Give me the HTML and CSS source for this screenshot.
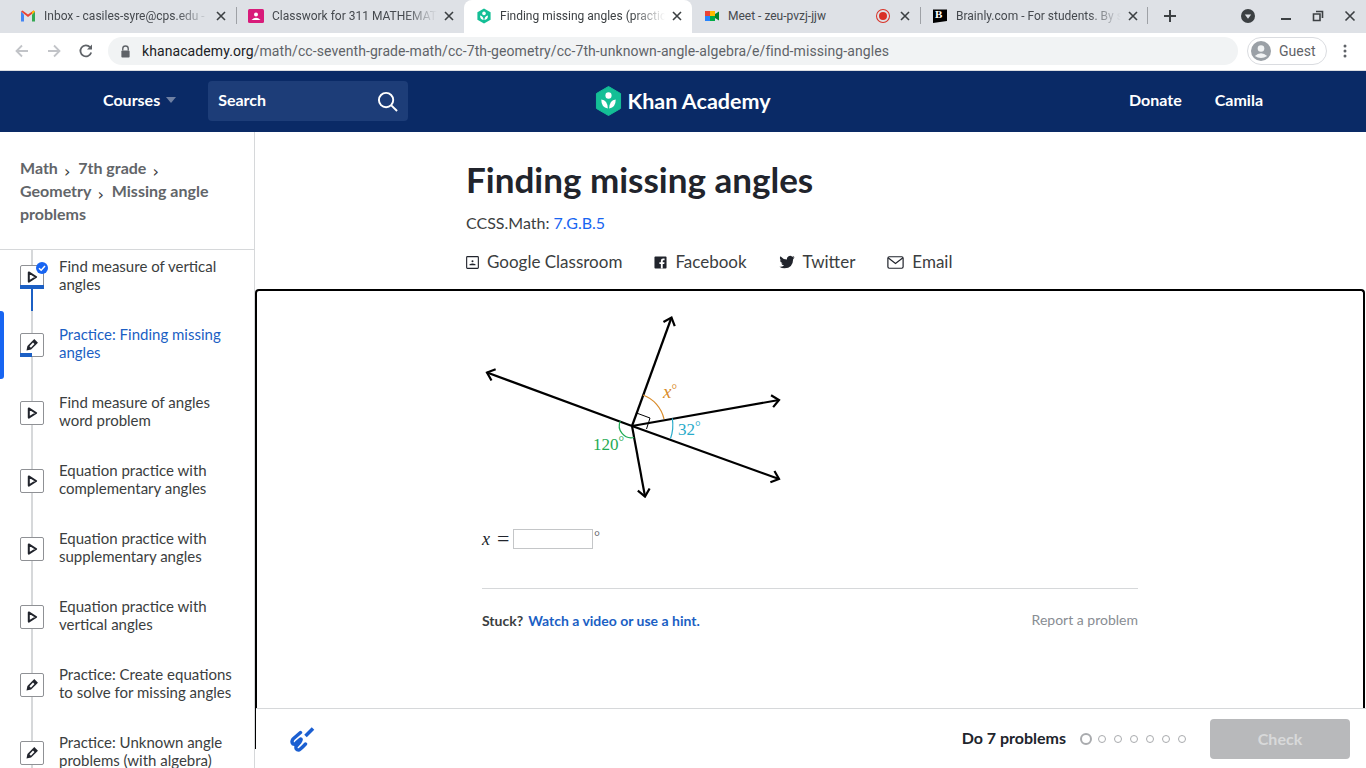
FILE: index.html
```html
<!DOCTYPE html>
<html lang="en">
<head>
<meta charset="utf-8">
<title>Finding missing angles</title>
<link rel="stylesheet" href="styles.css">
</head>
<body>
<svg class="defs" width="0" height="0" aria-hidden="true">
  <defs>
    <symbol id="play" viewBox="0 0 24 24"><path d="M8.5 7 L16.5 12 L8.5 17 Z" fill="none" stroke="#21242c" stroke-width="2.2" stroke-linejoin="round"/></symbol>
    <symbol id="pen" viewBox="0 0 24 24"><path d="M14.5 5.5 L18.5 9.5 L11 17 L6 18 L7 13 Z" fill="#21242c"/><path d="M9.2 13.3 L10.8 14.9 L14.7 11 L13.1 9.4 Z" fill="#fff"/></symbol>
    <marker id="head" viewBox="-12 -8 14 16" markerWidth="14" markerHeight="16" refX="0" refY="0" orient="auto" markerUnits="userSpaceOnUse"><path d="M-7 -6 L0 0 L-7 6" fill="none" stroke="#000" stroke-width="2.2"/></marker>
  </defs>
</svg>

<header class="tabstrip">
  <div class="tab">
    <svg class="fav" viewBox="0 0 16 16"><path d="M1 3.5 V13.5 H4 V6.5 Z" fill="#4285f4"/><path d="M15 3.5 V13.5 H12 V6.5 Z" fill="#34a853"/><path d="M1 3.5 L8 9 L15 3.5 L13.5 2.5 L8 6.5 L2.5 2.5 Z" fill="#ea4335"/><path d="M12 6.5 L15 3.5 L13.5 2.5 L12 3.6 Z" fill="#fbbc04"/></svg>
    <span class="tab-title">Inbox - casiles-syre@cps.edu - </span>
    <svg class="tab-x" viewBox="0 0 10 10"><path d="M1 1 L9 9 M9 1 L1 9" stroke="#3c4043" stroke-width="1.6"/></svg>
  </div>
  <div class="tab sep">
    <svg class="fav" viewBox="0 0 16 16"><rect width="16" height="14" y="1" rx="1.5" fill="#d81b7a"/><circle cx="8" cy="6.5" r="2" fill="#fff"/><path d="M3.5 12 Q8 7.5 12.5 12 Z" fill="#fff"/></svg>
    <span class="tab-title">Classwork for 311 MATHEMATICS</span>
    <svg class="tab-x" viewBox="0 0 10 10"><path d="M1 1 L9 9 M9 1 L1 9" stroke="#3c4043" stroke-width="1.6"/></svg>
  </div>
  <div class="tab active">
    <svg class="fav" viewBox="0 0 16 16"><path d="M8 0.5 L14.6 4.2 V11.8 L8 15.5 L1.4 11.8 V4.2 Z" fill="#14bf96"/><circle cx="8" cy="5.4" r="1.8" fill="#fff"/><path d="M4 7.5 Q7.5 8 7.6 12 Q4 11.5 4 7.5 Z M12 7.5 Q8.5 8 8.4 12 Q12 11.5 12 7.5 Z" fill="#fff"/></svg>
    <span class="tab-title">Finding missing angles (practice)</span>
    <svg class="tab-x" viewBox="0 0 10 10"><path d="M1 1 L9 9 M9 1 L1 9" stroke="#3c4043" stroke-width="1.6"/></svg>
  </div>
  <div class="tab">
    <svg class="fav" viewBox="0 0 16 16"><rect x="1" y="3" width="10" height="10" fill="#ffba00"/><rect x="1" y="8" width="5" height="5" fill="#2684fc"/><rect x="6" y="8" width="5" height="5" fill="#00ac47"/><rect x="1" y="3" width="5" height="5" fill="#ea4335"/><path d="M11 6 L15 3.5 V12.5 L11 10 Z" fill="#00832d"/></svg>
    <span class="tab-title plain">Meet - zeu-pvzj-jjw</span>
    <span class="rec"></span>
    <svg class="tab-x" viewBox="0 0 10 10"><path d="M1 1 L9 9 M9 1 L1 9" stroke="#3c4043" stroke-width="1.6"/></svg>
  </div>
  <div class="tab sep last">
    <svg class="fav" viewBox="0 0 16 16"><path d="M1 1.5 H15 V13 L1 15 Z" fill="#000"/></svg>
    <span class="fav-b">B</span>
    <span class="tab-title">Brainly.com - For students. By students.</span>
    <svg class="tab-x" viewBox="0 0 10 10"><path d="M1 1 L9 9 M9 1 L1 9" stroke="#3c4043" stroke-width="1.6"/></svg>
  </div>
  <div class="strip-right">
    <svg class="plus" viewBox="0 0 14 14"><path d="M7 1 V13 M1 7 H13" stroke="#3c4043" stroke-width="2"/></svg>
    <svg class="media" viewBox="0 0 14 14"><circle cx="7" cy="7" r="7" fill="#3c4043"/><path d="M3.8 5.5 H10.2 L7 9.8 Z" fill="#dee1e6"/></svg>
    <svg class="win win-min" viewBox="0 0 12 12"><path d="M1 9 H11" stroke="#3c4043" stroke-width="2"/></svg>
    <svg class="win win-res" viewBox="0 0 12 12"><path d="M4 1.5 H10.5 V8 M1.5 4 H8 V10.5 H1.5 Z" fill="none" stroke="#3c4043" stroke-width="1.6"/></svg>
    <svg class="win win-close" viewBox="0 0 12 12"><path d="M1.5 1.5 L10.5 10.5 M10.5 1.5 L1.5 10.5" stroke="#3c4043" stroke-width="1.6"/></svg>
  </div>
</header>

<div class="toolbar">
  <svg class="tb-icon" viewBox="0 0 16 16"><path d="M14 8 H3 M8 2.5 L2.5 8 L8 13.5" fill="none" stroke="#c2c4c8" stroke-width="1.8"/></svg>
  <svg class="tb-icon" viewBox="0 0 16 16"><path d="M2 8 H13 M8 2.5 L13.5 8 L8 13.5" fill="none" stroke="#c2c4c8" stroke-width="1.8"/></svg>
  <svg class="tb-icon" viewBox="0 0 16 16"><path d="M13.2 9.5 A5.5 5.5 0 1 1 12 4.2" fill="none" stroke="#5f6368" stroke-width="1.8"/><path d="M14 1.5 V6.5 H9 Z" fill="#5f6368"/></svg>
  <div class="omnibox">
    <svg class="lock" viewBox="0 0 12 14"><path d="M3 6 V4 A3 3 0 0 1 9 4 V6" fill="none" stroke="#5f6368" stroke-width="1.5"/><rect x="1.5" y="6" width="9" height="7.5" rx="1" fill="#5f6368"/></svg>
    <span class="url"><span class="host">khanacademy.org</span>/math/cc-seventh-grade-math/cc-7th-geometry/cc-7th-unknown-angle-algebra/e/find-missing-angles</span>
  </div>
  <div class="guest">
    <svg class="avatar" viewBox="0 0 20 20"><circle cx="10" cy="10" r="10" fill="#9aa0a6"/><circle cx="10" cy="7.5" r="3.3" fill="#f1f3f4"/><path d="M3.8 15 Q10 9.5 16.2 15 Q10 19 3.8 15 Z" fill="#f1f3f4"/></svg>
    <span>Guest</span>
  </div>
  <svg class="kebab" viewBox="0 0 4 16"><circle cx="2" cy="3" r="1.5" fill="#5f6368"/><circle cx="2" cy="8" r="1.5" fill="#5f6368"/><circle cx="2" cy="13" r="1.5" fill="#5f6368"/></svg>
</div>

<nav class="topnav">
  <div class="nav-left">
    <span class="courses">Courses</span>
    <span class="caret"></span>
    <div class="search">
      <span>Search</span>
      <svg class="search-icon" viewBox="0 0 22 22"><circle cx="9.5" cy="9.5" r="7.5" fill="none" stroke="#fff" stroke-width="2"/><path d="M15 15 L21 21" stroke="#fff" stroke-width="2"/></svg>
    </div>
  </div>
  <div class="logo">
    <svg class="logo-mark" viewBox="0 0 28 30" preserveAspectRatio="none"><path d="M14 0.5 L26.5 7.5 V22.5 L14 29.5 L1.5 22.5 V7.5 Z" fill="#14bf96" stroke="#14bf96" stroke-linejoin="round"/><circle cx="14" cy="9.5" r="3.2" fill="#fff"/><path d="M6.5 13.5 Q13 14 13.3 22.5 Q6.5 21.5 6.5 13.5 Z M21.5 13.5 Q15 14 14.7 22.5 Q21.5 21.5 21.5 13.5 Z" fill="#fff"/></svg>
    <span>Khan Academy</span>
  </div>
  <div class="nav-right">
    <span>Donate</span>
    <span>Camila</span>
  </div>
</nav>

<div class="page">
  <aside class="sidebar">
    <div class="crumbs">
      <span>Math</span><i>›</i> <span>7th grade</span><i>›</i><br>
      <span>Geometry</span><i>›</i> <span>Missing angle problems</span>
    </div>
    <div class="list-view">
      <ul class="lessons">
        <li class="lesson done">
          <span class="lesson-icon"><svg viewBox="0 0 24 24"><use href="#play"/></svg><span class="progress full"></span>
            <svg class="check" viewBox="0 0 12 12"><circle cx="6" cy="6" r="6" fill="#1865f2"/><path d="M3 6.2 L5.2 8.2 L9 4" fill="none" stroke="#fff" stroke-width="1.5"/></svg>
          </span>
          <span class="lesson-text">Find measure of vertical angles</span>
        </li>
        <li class="lesson current">
          <span class="lesson-icon"><svg viewBox="0 0 24 24"><use href="#pen"/></svg><span class="progress half"></span></span>
          <span class="lesson-text">Practice: Finding missing angles</span>
        </li>
        <li class="lesson">
          <span class="lesson-icon"><svg viewBox="0 0 24 24"><use href="#play"/></svg></span>
          <span class="lesson-text">Find measure of angles word problem</span>
        </li>
        <li class="lesson">
          <span class="lesson-icon"><svg viewBox="0 0 24 24"><use href="#play"/></svg></span>
          <span class="lesson-text">Equation practice with complementary angles</span>
        </li>
        <li class="lesson">
          <span class="lesson-icon"><svg viewBox="0 0 24 24"><use href="#play"/></svg></span>
          <span class="lesson-text">Equation practice with supplementary angles</span>
        </li>
        <li class="lesson">
          <span class="lesson-icon"><svg viewBox="0 0 24 24"><use href="#play"/></svg></span>
          <span class="lesson-text">Equation practice with vertical angles</span>
        </li>
        <li class="lesson">
          <span class="lesson-icon"><svg viewBox="0 0 24 24"><use href="#pen"/></svg></span>
          <span class="lesson-text">Practice: Create equations to solve for missing angles</span>
        </li>
        <li class="lesson">
          <span class="lesson-icon"><svg viewBox="0 0 24 24"><use href="#pen"/></svg></span>
          <span class="lesson-text">Practice: Unknown angle problems (with algebra)</span>
        </li>
      </ul>
    </div>
  </aside>

  <main class="main">
    <div class="intro">
      <h1>Finding missing angles</h1>
      <p class="ccss">CCSS.Math: <a>7.G.B.5</a></p>
      <div class="share">
        <span class="share-item">
          <svg viewBox="0 0 14 14"><rect x="0.7" y="0.7" width="12.6" height="12.6" rx="0.8" fill="none" stroke="#21242c" stroke-width="1.2"/><circle cx="7" cy="5.6" r="1.1" fill="#21242c"/><path d="M3.8 10 H10.2 V9 Q7 7 3.8 9 Z" fill="#21242c"/></svg>
          Google Classroom</span>
        <span class="share-item">
          <svg viewBox="0 0 14 14"><rect x="0.5" y="0.5" width="13" height="13" rx="1" fill="#21242c"/><path d="M9.4 13.5 V8.6 H11 L11.3 6.7 H9.4 V5.5 Q9.4 4.5 10.4 4.5 H11.4 V2.8 H9.8 Q7.4 2.8 7.4 5.2 V6.7 H5.8 V8.6 H7.4 V13.5 Z" fill="#fff"/></svg>
          Facebook</span>
        <span class="share-item">
          <svg class="wide" viewBox="0 0 16 14"><path d="M15.6 2.2 Q14.8 2.6 13.9 2.7 Q14.9 2.1 15.2 1 Q14.3 1.5 13.3 1.7 A3.2 3.2 0 0 0 7.9 4.6 Q4.1 4.4 1.4 1.2 Q0 3.8 2.4 5.5 Q1.6 5.5 1 5.1 Q1 7.6 3.6 8.3 Q2.8 8.5 2.1 8.3 Q2.9 10.3 5.1 10.4 Q3 12.1 0.4 11.8 Q3 13.4 5.6 13.3 Q13.9 13 14.2 3.9 Q15.1 3.2 15.6 2.2 Z" fill="#21242c"/></svg>
          Twitter</span>
        <span class="share-item">
          <svg class="wider" viewBox="0 0 18 14"><rect x="0.8" y="0.8" width="16.4" height="12.4" rx="1.5" fill="none" stroke="#21242c" stroke-width="1.3"/><path d="M1 2 L9 8 L17 2" fill="none" stroke="#21242c" stroke-width="1.3"/></svg>
          Email</span>
      </div>
    </div>

    <section class="card">
      <div class="problem">
        <svg class="diagram" viewBox="482 306 310 200" width="310" height="200">
          <g fill="none" stroke="#000" stroke-width="2.2" marker-end="url(#head)">
            <path d="M632 426 L671.5 317.5"/>
            <path d="M632 426 L487 372.5"/>
            <path d="M632 426 L779 400"/>
            <path d="M632 426 L779 479"/>
            <path d="M632 426 L645 496.5"/>
          </g>
          <path d="M636.5 413 L650 418 L646.5 429" fill="none" stroke="#000"/>
          <path d="M643 395 A33 33 0 0 1 664 419" fill="none" stroke="#d98c2b" stroke-width="1.2"/>
          <path d="M672.3 418.3 A41 41 0 0 1 670.5 438.5" fill="none" stroke="#29abca" stroke-width="1.2"/>
          <path d="M620.3 421 A12 12 0 0 0 634 437.5" fill="none" stroke="#1fab54" stroke-width="1.2"/>
          <text class="lbl lbl-x" x="663" y="398"><tspan class="it big">x</tspan><tspan class="deg" dy="-4">°</tspan></text>
          <text class="lbl lbl-b" x="678" y="435">32<tspan class="deg" dy="-4">°</tspan></text>
          <text class="lbl lbl-g" x="593" y="450">120<tspan class="deg" dy="-4">°</tspan></text>
        </svg>
        <div class="answer">
          <span class="it">x</span><span class="eq">=</span><span class="answer-box"></span><span class="answer-deg">°</span>
        </div>
        <div class="help">
          <span class="stuck">Stuck?</span>
          <a class="hint">Watch a video or use a hint.</a>
          <span class="report">Report a problem</span>
        </div>
      </div>
    </section>

    <footer class="bottom">
      <svg class="scribble" viewBox="0 0 26 26"><path d="M10.5 6.5 L3 13 Q1 16 3 18 Q5 19 7 16 L10.5 13 Q12 13 10 16 L6 20.5 Q5.5 24 8.5 24 Q10 24 15.5 18" fill="none" stroke="#1b5fd1" stroke-width="3.4" stroke-linecap="round" stroke-linejoin="round"/><path d="M15.5 10 L23 2.5" stroke="#1b5fd1" stroke-width="3.6"/></svg>
      <span class="do">Do 7 problems</span>
      <div class="dots">
        <span class="dot first"></span><span class="dot"></span><span class="dot"></span><span class="dot"></span><span class="dot"></span><span class="dot"></span><span class="dot"></span>
      </div>
      <button class="check-btn" type="button">Check</button>
    </footer>
  </main>
</div>
</body>
</html>
```
FILE: styles.css
```css
* { box-sizing: border-box; }
html, body { margin: 0; padding: 0; height: 768px; overflow: hidden; background: #fff; }
body { font-family: "Lato", "Open Sans", sans-serif; color: #21242c; display: flex; flex-direction: column; }
.defs { position: absolute; }

/* browser tab strip */
.tabstrip { height: 33px; flex: none; background: #dee1e6; display: flex; padding-left: 8px; font-family: "Roboto", sans-serif; font-size: 12px; color: #45494e; }
.tab { width: 228px; flex: none; display: flex; align-items: center; padding: 0 9px 2px 12px; position: relative; }
.tab.sep::before { content: ""; position: absolute; left: 0; top: 7px; height: 17px; width: 1px; background: #9ea1a6; }
.tab.last::after { content: ""; position: absolute; right: 0; top: 7px; height: 17px; width: 1px; background: #9ea1a6; }
.tab.active { background: #fff; border-radius: 8px 8px 0 0; color: #3c4043; }
.fav { width: 16px; height: 16px; flex: none; margin-right: 8px; }
.fav-b { position: absolute; left: 15px; top: 8px; color: #fff; font: 700 11px "Liberation Serif", serif; }
.tab-title { flex: 1; min-width: 0; margin-right: 7px; white-space: nowrap; overflow: hidden; -webkit-mask-image: linear-gradient(90deg, #000 80%, transparent 100%); mask-image: linear-gradient(90deg, #000 80%, transparent 100%); }
.tab-title.plain { -webkit-mask-image: none; mask-image: none; }
.tab-x { width: 10px; height: 10px; flex: none; margin-right: 1px; }
.rec { width: 12px; height: 12px; flex: none; margin-right: 11px; border-radius: 50%; background: #d93025; border: 2px solid #dee1e6; box-shadow: 0 0 0 1px #d93025; }
.strip-right { flex: 1; display: flex; align-items: center; padding-bottom: 2px; }
.plus { width: 14px; height: 14px; margin-left: 15px; }
.media { width: 14px; height: 14px; margin-left: 64px; }
.win { width: 12px; height: 12px; }
.win-min { margin-left: 25px; }
.win-res { margin-left: 20px; }
.win-close { margin-left: 20px; }

/* browser toolbar */
.toolbar { height: 38px; flex: none; background: #fff; display: flex; align-items: center; padding: 0 14px 1px 14px; font-family: "Roboto", sans-serif; border-bottom: 1px solid #dadce0; }
.tb-icon { width: 16px; height: 16px; margin-right: 16px; flex: none; }
.omnibox { width: 1130px; height: 28px; margin-left: -2px; background: #f1f3f4; border-radius: 14px; display: flex; align-items: center; padding-left: 12px; font-size: 14px; color: #5f6368; flex: none; }
.url { letter-spacing: 0.085px; }
.lock { width: 11px; height: 13px; margin-right: 11px; flex: none; }
.host { color: #202124; }
.guest { width: 80px; height: 28px; margin-left: 9px; border: 1px solid #dadce0; border-radius: 14px; display: flex; align-items: center; gap: 8px; padding-left: 3px; font-size: 14px; color: #5f6368; flex: none; }
.avatar { width: 20px; height: 20px; }
.kebab { width: 4px; height: 16px; margin-left: 16px; }

/* site nav */
.topnav { height: 61px; flex: none; background: #0a2a66; color: #fff; display: grid; grid-template-columns: 1fr auto 1fr; align-items: center; padding: 0 103px; font-size: 16px; line-height: 20px; font-weight: 700; border-bottom: 1px solid #0a2a66; }
.nav-left { display: flex; align-items: center; }
.nav-left span, .nav-right span { position: relative; top: -1px; }
.caret { width: 0; height: 0; margin-left: 6px; border: 5px solid transparent; border-top: 6px solid #6f80a3; border-bottom: 0; }
.search { width: 200px; height: 40px; margin-left: 32px; background: #1d3d78; border-radius: 4px; display: flex; align-items: center; justify-content: space-between; padding: 0 10px; }
.search-icon { width: 21px; height: 21px; }
.logo { display: flex; align-items: center; gap: 5px; font-size: 21.5px; font-weight: 700; justify-self: center; }
.logo-mark { width: 27px; height: 30px; }
.nav-right { display: flex; justify-content: flex-end; gap: 33px; }

/* page */
.page { flex: 1; min-height: 0; display: flex; }
.sidebar { width: 255px; flex: none; border-right: 1px solid #d6d8da; display: flex; flex-direction: column; }
.crumbs { height: 118px; padding: 24px 20px 0; border-bottom: 1px solid #d6d8da; font-size: 16px; line-height: 23px; font-weight: 700; color: #626569; flex: none; }
.crumbs i { font-style: normal; font-weight: 400; margin: 0 4px 0 6px; font-family: "DejaVu Sans", sans-serif; font-size: 16px; line-height: 0; position: relative; top: 3px; color: #3b3e40; }
.list-view { flex: 1; min-height: 0; overflow: hidden; }
.lessons { list-style: none; margin: -7px 0 0; padding: 0; }
.lesson { height: 68px; display: flex; align-items: center; position: relative; padding-left: 20px; gap: 15px; font-size: 15px; line-height: 18px; color: #3b3e40; }
.lesson::before { content: ""; position: absolute; left: 31px; top: 0; bottom: 0; width: 2px; background: #d6d8da; }
.lesson.done::before { background: linear-gradient(#d6d8da 50%, #1b5fc4 50%); }
.lesson.current { color: #1b5fc4; }
.lesson.current::after { content: ""; position: absolute; left: 0; top: 0; bottom: 0; width: 4px; background: #1865f2; border-radius: 0 3px 3px 0; }
.lesson-icon { width: 24px; height: 24px; flex: none; position: relative; background: #fff; border: 1px solid #8f9195; border-radius: 2px; display: flex; overflow: visible; }
.lesson-icon > svg { width: 22px; height: 22px; }
.lesson-text { width: 176px; margin-bottom: 4px; }
.progress { position: absolute; left: -1px; bottom: -1px; height: 4px; background: #1b5fc4; }
.progress.full { width: 24px; }
.progress.half { width: 12px; }
.lesson-icon > svg.check { position: absolute; width: 12px; height: 12px; right: -5px; top: -4px; }

/* main column */
.main { flex: 1; min-width: 0; position: relative; display: flex; flex-direction: column; }
.intro { height: 157px; padding: 24px 0 0 211px; flex: none; }
h1 { margin: 0; font-size: 35px; line-height: 46px; font-weight: 700; color: #21242c; }
.ccss { margin: 10px 0 0; font-size: 16px; line-height: 22px; color: #3b3e40; }
.ccss a { color: #1865f2; }
.share { margin-top: 16px; display: flex; gap: 32px; font-size: 17px; line-height: 24px; color: #3b3e40; }
.share-item { display: flex; align-items: center; gap: 8px; }
.share-item svg { width: 13px; height: 13px; }
.share-item svg.wide { width: 16px; height: 14px; }
.share-item svg.wider { width: 17px; height: 13px; }

.card { height: 460px; flex: none; margin-right: 1px; border: 2px solid #000; border-bottom: 0; border-radius: 4px 4px 0 0; padding: 15px 0 0 225px; }
.problem { width: 656px; }
.diagram { display: block; }
.lbl { font-family: "Liberation Serif", serif; font-size: 17px; }
.lbl-x { fill: #d98c2b; }
.lbl-b { fill: #29abca; }
.lbl-g { fill: #1fab54; }
.it { font-style: italic; }
.big { font-size: 19px; }
.deg { font-size: 14px; }
.answer { margin-top: 23px; height: 20px; display: flex; align-items: center; font-family: "Liberation Serif", serif; font-size: 18px; color: #21242c; }
.eq { margin: 0 3.5px 0 7px; font-size: 22px; line-height: 1; }
.answer-box { width: 80px; height: 20px; border: 1px solid #c4c6c8; background: #fff; }
.answer-deg { font-size: 15px; line-height: 1; margin: -6px 0 0 1px; color: #55585c; }
.help { margin-top: 39px; padding-top: 22px; border-top: 1px solid #d6d8da; display: flex; align-items: center; font-size: 14px; line-height: 18px; }
.stuck { font-weight: 700; color: #3b3e40; }
.hint { margin-left: 5px; font-weight: 700; color: #1b5fc4; }
.report { margin-left: auto; margin-bottom: 2px; color: #888d93; }

.bottom { position: absolute; left: 1px; right: 0; bottom: 0; height: 60px; background: #fff; border-top: 1px solid #d6d8da; display: flex; align-items: center; padding: 0 16px 0 34px; }
.scribble { width: 26px; height: 26px; flex: none; margin-top: 1px; }
.do { margin-left: auto; margin-bottom: 2px; font-size: 16px; font-weight: 700; color: #21242c; }
.dots { display: flex; align-items: center; gap: 8px; margin-left: 14px; }
.dot { width: 8px; height: 8px; border-radius: 50%; border: 1px solid #a9abae; }
.dot.first { width: 12px; height: 12px; border: 2px solid #a9abae; margin-right: -2px; }
.check-btn { width: 140px; height: 40px; margin-left: 24px; border: 0; border-radius: 4px; background: #b8b9bb; color: #d8d9da; font: 700 16px "Lato", sans-serif; }
```
